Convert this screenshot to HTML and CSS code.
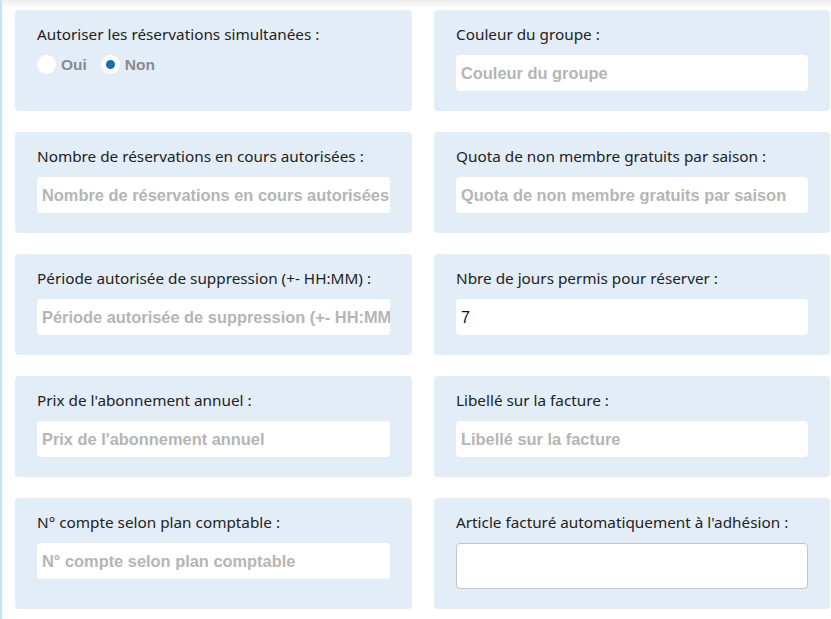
FILE: index.html
```html
<!DOCTYPE html>
<html lang="fr">
<head>
<meta charset="utf-8">
<title>Paramètres du groupe</title>
<link rel="stylesheet" href="styles.css">
</head>
<body>
<div class="page">
  <div class="grid">
    <div class="card">
      <div class="label">Autoriser les réservations simultanées :</div>
      <div class="radios">
        <label class="radio"><span class="dot"></span><span class="rtext">Oui</span></label>
        <label class="radio"><span class="dot checked"></span><span class="rtext">Non</span></label>
      </div>
    </div>
    <div class="card">
      <div class="label">Couleur du groupe :</div>
      <div class="input"><span class="ph">Couleur du groupe</span></div>
    </div>

    <div class="card">
      <div class="label">Nombre de réservations en cours autorisées :</div>
      <div class="input"><span class="ph">Nombre de réservations en cours autorisées</span></div>
    </div>
    <div class="card">
      <div class="label">Quota de non membre gratuits par saison :</div>
      <div class="input"><span class="ph">Quota de non membre gratuits par saison</span></div>
    </div>

    <div class="card">
      <div class="label">Période autorisée de suppression (+- HH:MM) :</div>
      <div class="input"><span class="ph">Période autorisée de suppression (+- HH:MM)</span></div>
    </div>
    <div class="card">
      <div class="label">Nbre de jours permis pour réserver :</div>
      <div class="input"><span class="val">7</span></div>
    </div>

    <div class="card">
      <div class="label">Prix de l'abonnement annuel :</div>
      <div class="input"><span class="ph">Prix de l'abonnement annuel</span></div>
    </div>
    <div class="card">
      <div class="label">Libellé sur la facture :</div>
      <div class="input"><span class="ph">Libellé sur la facture</span></div>
    </div>

    <div class="card">
      <div class="label">N° compte selon plan comptable :</div>
      <div class="input"><span class="ph">N° compte selon plan comptable</span></div>
    </div>
    <div class="card">
      <div class="label">Article facturé automatiquement à l'adhésion :</div>
      <div class="select"></div>
    </div>
  </div>
</div>
</body>
</html>
```

FILE: styles.css
```css
html, body {
  margin: 0;
  padding: 0;
  background: #ffffff;
  height: 100%;
}
body {
  font-family: "Noto Sans", "Open Sans", sans-serif;
  overflow: hidden;
}
.page {
  min-height: 619px;
  border-left: 2px solid #c2e3fa;
  background: linear-gradient(to bottom, #ececec 0px, #f7f7f7 4px, #ffffff 9px);
  padding: 10px 0 0 13px;
  box-sizing: border-box;
}
.grid {
  display: grid;
  grid-template-columns: 397px 396px;
  column-gap: 22px;
  row-gap: 21px;
}
.card {
  background: #e3edf7;
  border-radius: 4px;
  padding: 15px 22px 20px 22px;
  min-height: 101px;
  box-sizing: border-box;
}
.label {
  font-size: 15.3px;
  line-height: 18px;
  color: #222;
  margin-bottom: 12px;
  white-space: nowrap;
}
.input {
  background: #fff;
  border-radius: 4px;
  height: 36px;
  display: flex;
  align-items: center;
  padding-left: 5px;
  overflow: hidden;
  white-space: nowrap;
}
.ph {
  font-family: "Liberation Sans", Arial, sans-serif;
  font-weight: bold;
  font-size: 16.4px;
  color: #b5b5b5;
  padding-top: 1px;
}
.val {
  font-family: "Liberation Sans", Arial, sans-serif;
  font-size: 16px;
  color: #111;
  padding-top: 1px;
}
.select {
  background: #fff;
  border: 1px solid #c5c5c5;
  border-radius: 4px;
  height: 46px;
  box-sizing: border-box;
}
.radios {
  display: flex;
  align-items: center;
  gap: 14px;
  margin-top: 1px;
}
.radio {
  display: flex;
  align-items: center;
  gap: 5px;
}
.dot {
  width: 19px;
  height: 19px;
  border-radius: 50%;
  background: #fff;
  display: flex;
  align-items: center;
  justify-content: center;
}
.dot.checked::after {
  content: "";
  width: 9px;
  height: 9px;
  border-radius: 50%;
  background: #1a6cb3;
}
.rtext {
  font-family: "Liberation Sans", Arial, sans-serif;
  font-weight: bold;
  font-size: 15.5px;
  color: #8a8a8a;
}
```
